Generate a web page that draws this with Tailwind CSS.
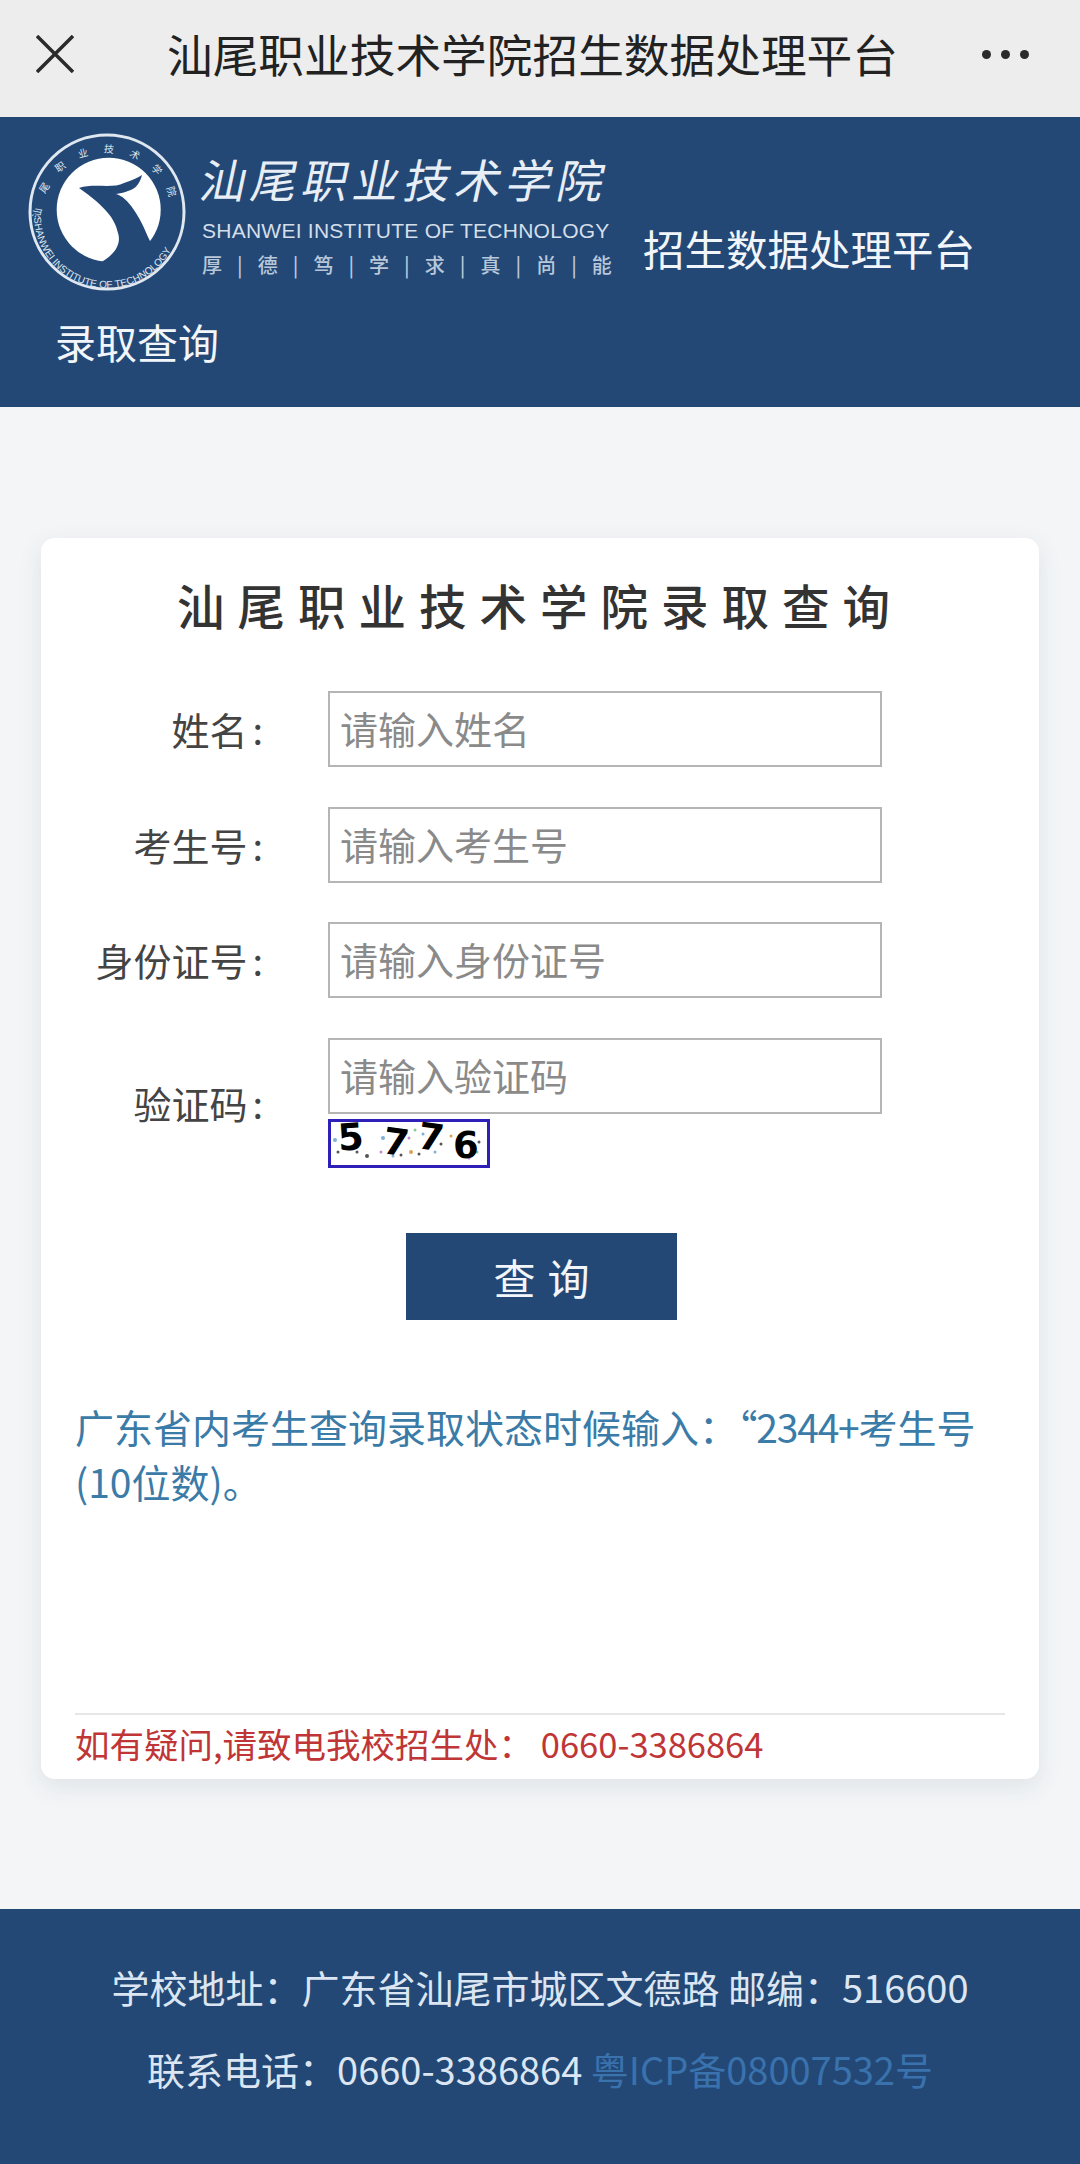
<!DOCTYPE html>
<html lang="zh-CN">
<head>
    <meta charset="UTF-8">
    <meta name="viewport" content="width=device-width, initial-scale=1.0">
    <title>汕尾职业技术学院招生数据处理平台</title>
    <script src="https://cdn.jsdelivr.net/npm/@tailwindcss/browser@4"></script>
</head>
<body class="bg-[#f3f5f7] font-['Noto_Sans_CJK_SC','Noto_Sans',sans-serif]">
    <div class="flex flex-col w-[1080px] h-[2164px] overflow-hidden">
        <!-- WeChat title bar -->
        <div class="h-[117px] shrink-0 bg-[#ededed] flex items-center pl-[36px] pr-[51px] pb-[9px]">
            <svg class="w-[38px] h-[38px] shrink-0" viewBox="0 0 38 38" fill="none" stroke="#2b2b2b" stroke-width="3.5"><path d="M1 1 L37 37 M37 1 L1 37"/></svg>
            <span class="ml-[93px] text-[45.7px] leading-none text-[#222] whitespace-nowrap">汕尾职业技术学院招生数据处理平台</span>
            <div class="ml-auto flex gap-[10px]">
                <span class="w-[9px] h-[9px] rounded-full bg-[#2b2b2b]"></span>
                <span class="w-[9px] h-[9px] rounded-full bg-[#2b2b2b]"></span>
                <span class="w-[9px] h-[9px] rounded-full bg-[#2b2b2b]"></span>
            </div>
        </div>

        <!-- Header -->
        <div class="h-[290px] shrink-0 bg-[#234876] text-[#f2f6fa] pl-[28px] pt-[16px]">
            <div class="flex items-center">
                <svg class="w-[160px] h-[160px] shrink-0" viewBox="0 0 160 160">
                    <circle cx="79" cy="79" r="77" fill="none" stroke="#dfe7f0" stroke-width="3"/>
                    <circle cx="80.7" cy="76.7" r="52" fill="#fff"/>
                    <defs>
                        <path id="ring-top" d="M 13 86 A 66 66 0 0 1 145 86"/>
                        <path id="ring-bottom" d="M 6 82 A 73 73 0 0 0 152 82"/>
                    </defs>
                    <text font-size="10" fill="#dfe7f0" letter-spacing="15"><textPath href="#ring-top">汕尾职业技术学院</textPath></text>
                    <text font-size="10" fill="#dfe7f0" font-family="Liberation Sans"><textPath href="#ring-bottom" startOffset="1%">SHANWEI INSTITUTE OF TECHNOLOGY</textPath></text>
                    <!-- bird: head streak, then body running out through the lower right of the disc -->
                    <path d="M51 55 C65 50 85 56 96 50 C104 47 110 45 114 42 C112 50 108 56 100 58 C95 60 92 60 88 61 C100 64 112 84 120 104 L124 112 L92 136 L68 132 C85 124 94 112 90 100 C87 86 78 74 51 55 Z" fill="#234876"/>
                </svg>
                <div class="w-[410px] ml-[14px] shrink-0 -mt-[2px]">
                    <div class="text-[46px] leading-[60px] tracking-[5px] -skew-x-12 whitespace-nowrap text-[#e8eef5]">汕尾职业技术学院</div>
                    <div class="mt-[13px] text-[21px] leading-[20px] font-['Liberation_Sans',sans-serif] text-[#d5dfea] whitespace-nowrap tracking-[0.25px]">SHANWEI INSTITUTE OF TECHNOLOGY</div>
                    <div class="mt-[13px] flex justify-between text-[20px] leading-[22px] font-medium text-[#b8c7d9]">
                        <span>厚</span><span>|</span><span>德</span><span>|</span><span>笃</span><span>|</span><span>学</span><span>|</span><span>求</span><span>|</span><span>真</span><span>|</span><span>尚</span><span>|</span><span>能</span>
                    </div>
                </div>
                <span class="ml-[31px] mt-[72px] text-[41.5px] leading-none whitespace-nowrap">招生数据处理平台</span>
            </div>
            <div class="ml-[27px] mt-[20px] text-[41px] leading-[56px]">录取查询</div>
        </div>

        <!-- Card -->
        <div class="flex-1 pt-[131px] px-[41px]">
            <div class="h-[1241px] bg-white rounded-[14px] shadow-[0_8px_24px_rgba(60,80,100,0.1)] flex flex-col px-[34px]">
                <h1 class="pt-[37px] text-center text-[47.5px] leading-[60px] font-medium tracking-[13px] text-[#333] whitespace-nowrap">汕尾职业技术学院录取查询</h1>

                <div class="mt-[56px] flex flex-col gap-[39.5px]">
                    <div class="flex items-center">
                        <label class="w-[188px] text-right text-[38px] text-[#444] pb-[1px]">姓名<span class="ml-[5px]">:</span></label>
                        <div class="ml-[65px] w-[554px] h-[76px] border-2 border-[#b5b5b5] flex items-center pl-[10px] pb-[3px] text-[38px] text-[#8a8a8a]">请输入姓名</div>
                    </div>
                    <div class="flex items-center">
                        <label class="w-[188px] text-right text-[38px] text-[#444] pb-[1px]">考生号<span class="ml-[5px]">:</span></label>
                        <div class="ml-[65px] w-[554px] h-[76px] border-2 border-[#b5b5b5] flex items-center pl-[10px] pb-[3px] text-[38px] text-[#8a8a8a]">请输入考生号</div>
                    </div>
                    <div class="flex items-center">
                        <label class="w-[188px] text-right text-[38px] text-[#444] pb-[1px] whitespace-nowrap">身份证号<span class="ml-[5px]">:</span></label>
                        <div class="ml-[65px] w-[554px] h-[76px] border-2 border-[#b5b5b5] flex items-center pl-[10px] pb-[3px] text-[38px] text-[#8a8a8a]">请输入身份证号</div>
                    </div>
                    <div class="flex items-center">
                        <label class="w-[188px] text-right text-[38px] text-[#444] pb-[1px]">验证码<span class="ml-[5px]">:</span></label>
                        <div class="ml-[65px]">
                            <div class="w-[554px] h-[76px] border-2 border-[#b5b5b5] flex items-center pl-[10px] pb-[3px] text-[38px] text-[#8a8a8a]">请输入验证码</div>
                            <div class="relative mt-[5px] w-[162px] h-[49px] border-[3px] border-[#2d1fb8] bg-white">
                                <svg class="absolute inset-0" width="156" height="43" viewBox="0 0 156 43">
                                    <g fill="#555">
                                        <circle cx="7" cy="30" r="1.5"/><circle cx="26" cy="30" r="1.5"/><circle cx="36" cy="34" r="2"/><circle cx="58" cy="8" r="1.5"/>
                                        <circle cx="70" cy="33" r="1.5"/><circle cx="88" cy="32" r="1.5"/><circle cx="110" cy="22" r="1.5"/><circle cx="148" cy="20" r="1.5"/>
                                    </g>
                                    <g fill="#d9a05a"><circle cx="80" cy="30" r="2"/><circle cx="120" cy="14" r="1.5"/></g>
                                    <g fill="#7fb0d8"><circle cx="52" cy="16" r="2"/><circle cx="62" cy="34" r="1.5"/><circle cx="92" cy="12" r="1.5"/><circle cx="104" cy="30" r="1.5"/><circle cx="4" cy="18" r="2"/></g>
                                    <g fill="#c58ac9"><circle cx="50" cy="30" r="1.5"/><circle cx="78" cy="16" r="1.5"/><circle cx="138" cy="36" r="1.5"/></g>
                                    <g fill="#8cc79a"><circle cx="146" cy="30" r="1.5"/><circle cx="84" cy="8" r="1.5"/></g>
                                </svg>
                                <span class="absolute left-[7px] top-[-3px] rotate-[-4deg] text-[37px] leading-[38px] font-bold font-['DejaVu_Sans',sans-serif] text-black">5</span>
                                <span class="absolute left-[52px] top-[2px] rotate-[8deg] text-[37px] leading-[38px] font-bold font-['DejaVu_Sans',sans-serif] text-black">7</span>
                                <span class="absolute left-[87px] top-[-3px] rotate-[8deg] text-[37px] leading-[38px] font-bold font-['DejaVu_Sans',sans-serif] text-black">7</span>
                                <span class="absolute left-[122px] top-[5px] text-[37px] leading-[38px] font-bold font-['DejaVu_Sans',sans-serif] text-black">6</span>
                            </div>
                        </div>
                    </div>
                </div>

                <button class="mt-[65px] ml-[331px] w-[271px] h-[87px] shrink-0 bg-[#234876] text-[#f2f6fa] text-[42px] tracking-[12px] pl-[12px]">查询</button>

                <p class="mt-[79px] text-[39px] leading-[55px] text-[#3a7ba8] whitespace-nowrap">广东省内考生查询录取状态时候输入：<span class="tracking-[-1.2px]">“2344+</span>考生号<br>(10位数)。</p>

                <div class="mt-auto border-t-2 border-[#e6e6e6] h-[66px] pb-[6px] flex items-center text-[34.5px] text-[#c03535] whitespace-nowrap">如有疑问,请致电我校招生处：&nbsp;0660-3386864</div>
            </div>
        </div>

        <!-- Footer -->
        <div class="h-[255px] shrink-0 bg-[#234876] flex flex-col items-center pt-[50px] gap-[26px] text-[38px] leading-[56px] text-[#dce6f2] whitespace-nowrap">
            <p>学校地址：广东省汕尾市城区文德路 邮编：516600</p>
            <p>联系电话：0660-3386864 <a href="#" class="text-[#3a72ad]">粤ICP备08007532号</a></p>
        </div>
    </div>
</body>
</html>
